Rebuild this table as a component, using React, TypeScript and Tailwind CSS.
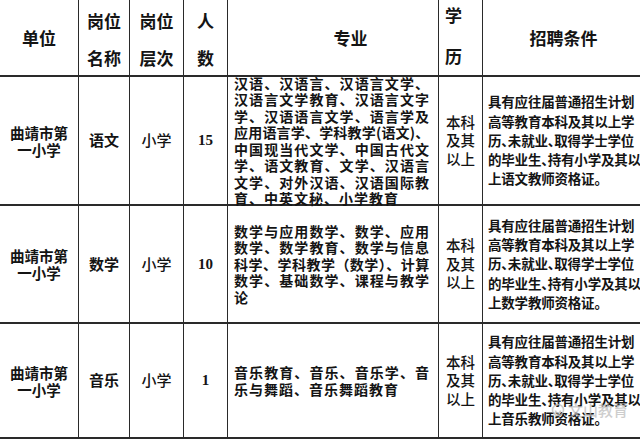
const cjk = "font-['Noto_Sans_CJK_SC',sans-serif]";

type Row = {
  unit: string[];
  post: string;
  level: string;
  count: string;
  major: { text: string; tight?: boolean }[];
  subject: string;
};

const rows: Row[] = [
  {
    unit: ["曲靖市第", "一小学"],
    post: "语文",
    level: "小学",
    count: "15",
    major: [
      { text: "汉语、汉语言、汉语言文学、" },
      { text: "汉语言文学教育、汉语言文字" },
      { text: "学、汉语语言文学、语言学及" },
      { text: "应用语言学、学科教学(语文)、", tight: true },
      { text: "中国现当代文学、中国古代文" },
      { text: "学、语文教育、文学、汉语言" },
      { text: "文学、对外汉语、汉语国际教" },
      { text: "育、中英文秘、小学教育" },
    ],
    subject: "语文",
  },
  {
    unit: ["曲靖市第", "一小学"],
    post: "数学",
    level: "小学",
    count: "10",
    major: [
      { text: "数学与应用数学、数学、应用" },
      { text: "数学、数学教育、数学与信息" },
      { text: "科学、学科教学（数学）、计算", tight: true },
      { text: "数学、基础数学、课程与教学" },
      { text: "论" },
    ],
    subject: "数学",
  },
  {
    unit: ["曲靖市第", "一小学"],
    post: "音乐",
    level: "小学",
    count: "1",
    major: [
      { text: "音乐教育、音乐、音乐学、音" },
      { text: "乐与舞蹈、音乐舞蹈教育" },
    ],
    subject: "音乐",
  },
];

const heights = ["h-[129px]", "h-[118px]", "h-[115px]"];

function Cell({ className = "", children }: { className?: string; children: React.ReactNode }) {
  return (
    <div className={`flex flex-col items-center justify-center border-r border-b-2 border-[#2a2a2a] text-center ${className}`}>
      {children}
    </div>
  );
}

export default function App() {
  return (
    <div className={`relative h-[441px] w-[640px] overflow-hidden bg-white text-[#141414] ${cjk}`}>
      <div className="grid grid-cols-[79px_51px_54px_44px_211px_44px_167px]">
        {/* header */}
        <Cell className="h-[77px] text-[17px] font-bold leading-[20px]">单位</Cell>
        <Cell className="h-[77px] pt-[3px] text-[17px] font-bold leading-[37px]">
          <span>岗位</span>
          <span>名称</span>
        </Cell>
        <Cell className="h-[77px] pt-[3px] text-[17px] font-bold leading-[37px]">
          <span>岗位</span>
          <span>层次</span>
        </Cell>
        <Cell className="h-[77px] pt-[3px] text-[17px] font-bold leading-[37px]">
          <span>人</span>
          <span>数</span>
        </Cell>
        <Cell className="h-[77px] pl-[35px] text-[17px] font-bold leading-[20px]">专业</Cell>
        <div className="flex h-[77px] flex-col items-start justify-between border-r border-b-2 border-[#2a2a2a] pt-[5px] pb-[9px] pl-[6px] text-[17px] font-bold leading-[20px]">
          <span>学</span>
          <span>历</span>
        </div>
        <div className="flex h-[77px] items-center justify-center border-b-2 border-[#2a2a2a] text-[17px] font-bold">
          <span className="pr-[6px]">招聘条件</span>
        </div>

        {rows.map((r, i) => (
          <div key={i} className="contents">
            <Cell className={`${heights[i]} text-[14.5px] font-semibold leading-[17px]`}>
              {r.unit.map((u) => (
                <span key={u}>{u}</span>
              ))}
            </Cell>
            <Cell className={`${heights[i]} text-[15px] font-semibold`}>{r.post}</Cell>
            <Cell className={`${heights[i]} text-[15px] font-medium`}>{r.level}</Cell>
            <Cell className={`${heights[i]} font-['Liberation_Serif',serif] text-[15px] font-bold`}>{r.count}</Cell>
            <div className={`flex ${heights[i]} flex-col justify-center border-r border-b-2 border-[#2a2a2a] pr-[9px] pl-[6px] text-[14px] font-semibold leading-[16.5px]`}>
              {r.major.map((m, j) => (
                <div
                  key={j}
                  className={`whitespace-nowrap ${j < r.major.length - 1 ? "text-justify [text-align-last:justify]" : "tracking-[1px]"} ${m.tight ? "tracking-[-0.3px]" : ""}`}
                >
                  {m.text}
                </div>
              ))}
            </div>
            <Cell className={`${heights[i]} text-[14.5px] font-medium leading-[18.5px]`}>
              <span>本科</span>
              <span>及其</span>
              <span>以上</span>
            </Cell>
            <div className={`flex ${heights[i]} flex-col justify-center border-b-2 border-[#2a2a2a] pl-[5px] text-[13.5px] font-semibold leading-[19.3px] tracking-[-0.2px] [font-feature-settings:'halt']`}>
              <div className="whitespace-nowrap">具有应往届普通招生计划</div>
              <div className="whitespace-nowrap">高等教育本科及其以上学</div>
              <div className="whitespace-nowrap">历、未就业、取得学士学位</div>
              <div className="whitespace-nowrap">的毕业生、持有小学及其以</div>
              <div className="whitespace-nowrap">上{r.subject}教师资格证。</div>
            </div>
          </div>
        ))}
      </div>

      {/* watermark */}
      <div className="absolute top-[401px] left-[551px] flex items-center gap-[3px] text-[#bdbdbd] opacity-75">
        <svg width="14" height="14" viewBox="0 0 14 14" fill="none" stroke="#bdbdbd" strokeWidth="1.6">
          <circle cx="7" cy="7" r="5.5" />
          <path d="M4.5 7.5a2.5 2.5 0 0 0 5 0" />
        </svg>
        <span className="text-[15px] leading-[18px] font-medium">文山教育</span>
      </div>
    </div>
  );
}
